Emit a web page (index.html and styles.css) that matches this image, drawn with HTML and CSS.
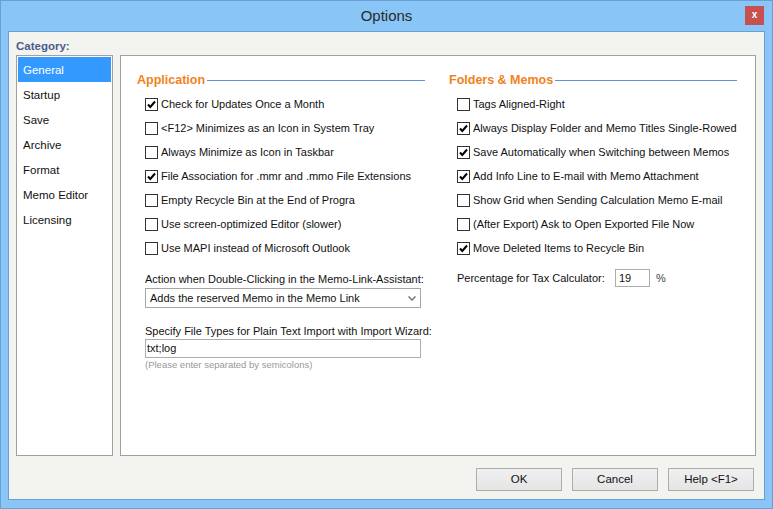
FILE: index.html
```html
<!DOCTYPE html>
<html>
<head>
<meta charset="utf-8">
<title>Options</title>
<link rel="stylesheet" href="styles.css">
</head>
<body>
<div class="window">
  <div class="titlebar">
    <span></span>
    <span class="title">Options</span>
    <div class="close">x</div>
  </div>
  <div class="client">
    <div class="cat-label">Category:</div>
    <div class="main-row">
      <ul class="cat-list">
        <li class="sel">General</li>
        <li>Startup</li>
        <li>Save</li>
        <li>Archive</li>
        <li>Format</li>
        <li>Memo Editor</li>
        <li>Licensing</li>
      </ul>
      <div class="panel">
        <div class="col">
          <div class="heading"><span>Application</span><i class="rule"></i></div>
          <div class="row"><span class="cb on"><svg viewBox="0 0 11 11"><polyline points="2,5.5 4.3,8 9,2.5"/></svg></span>Check for Updates Once a Month</div>
          <div class="row"><span class="cb"></span>&lt;F12&gt; Minimizes as an Icon in System Tray</div>
          <div class="row"><span class="cb"></span>Always Minimize as Icon in Taskbar</div>
          <div class="row"><span class="cb on"><svg viewBox="0 0 11 11"><polyline points="2,5.5 4.3,8 9,2.5"/></svg></span>File Association for .mmr and .mmo File Extensions</div>
          <div class="row"><span class="cb"></span>Empty Recycle Bin at the End of Progra</div>
          <div class="row"><span class="cb"></span>Use screen-optimized Editor (slower)</div>
          <div class="row"><span class="cb"></span>Use MAPI instead of Microsoft Outlook</div>
          <div class="field-label">Action when Double-Clicking in the Memo-Link-Assistant:</div>
          <div class="select"><span>Adds the reserved Memo in the Memo Link</span><svg class="chev" viewBox="0 0 8 5"><polyline points="0.5,0.5 4,4 7.5,0.5"/></svg></div>
          <div class="field-label second">Specify File Types for Plain Text Import with Import Wizard:</div>
          <div class="input">txt;log</div>
          <div class="hint">(Please enter separated by semicolons)</div>
        </div>
        <div class="col">
          <div class="heading"><span>Folders &amp; Memos</span><i class="rule"></i></div>
          <div class="row"><span class="cb"></span>Tags Aligned-Right</div>
          <div class="row"><span class="cb on"><svg viewBox="0 0 11 11"><polyline points="2,5.5 4.3,8 9,2.5"/></svg></span>Always Display Folder and Memo Titles Single-Rowed</div>
          <div class="row"><span class="cb on"><svg viewBox="0 0 11 11"><polyline points="2,5.5 4.3,8 9,2.5"/></svg></span>Save Automatically when Switching between Memos</div>
          <div class="row"><span class="cb on"><svg viewBox="0 0 11 11"><polyline points="2,5.5 4.3,8 9,2.5"/></svg></span>Add Info Line to E-mail with Memo Attachment</div>
          <div class="row"><span class="cb"></span>Show Grid when Sending Calculation Memo E-mail</div>
          <div class="row"><span class="cb"></span>(After Export) Ask to Open Exported File Now</div>
          <div class="row"><span class="cb on"><svg viewBox="0 0 11 11"><polyline points="2,5.5 4.3,8 9,2.5"/></svg></span>Move Deleted Items to Recycle Bin</div>
          <div class="pct-row">
            <span class="pct-label">Percentage for Tax Calculator:</span>
            <span class="pct-input">19</span>
            <span class="pct-sign">%</span>
          </div>
        </div>
      </div>
    </div>
    <div class="buttons">
      <div class="btn">OK</div>
      <div class="btn">Cancel</div>
      <div class="btn">Help &lt;F1&gt;</div>
    </div>
  </div>
</div>
</body>
</html>
```
FILE: styles.css
```css
* { box-sizing: border-box; }
html, body { margin: 0; padding: 0; }
body {
  width: 773px;
  height: 509px;
  overflow: hidden;
  font-family: "Liberation Sans", Arial, sans-serif;
  font-size: 11px;
  color: #111;
}
.window {
  width: 773px;
  height: 509px;
  background: #8ac5f8;
  border: 1px solid #6a9fd2;
  display: flex;
  flex-direction: column;
}
.titlebar {
  height: 30px;
  display: grid;
  grid-template-columns: 1fr auto 1fr;
  align-items: center;
}
.title {
  font-size: 15px;
  color: #2a2a2a;
  margin-top: -1px;
}
.close {
  justify-self: end;
  align-self: start;
  margin-top: 5px;
  margin-right: 8px;
  width: 19px;
  height: 19px;
  background: #c75050;
  color: #fff;
  font-weight: bold;
  font-size: 10px;
  line-height: 18px;
  text-align: center;
}
.client {
  margin: 0 7px 8px 7px;
  height: 469px;
  background: #f3f4ef;
  border: 1px solid #6e9ed0;
  padding: 7px 8px 8px 7px;
  display: flex;
  flex-direction: column;
}
.cat-label {
  height: 16px;
  line-height: 15px;
  font-weight: bold;
  font-size: 11.5px;
  color: #4a5c8c;
}
.main-row {
  display: flex;
  gap: 7px;
  height: 401px;
}
.cat-list {
  list-style: none;
  margin: 0;
  width: 97px;
  height: 401px;
  border: 1px solid #a0a0a0;
  background: #fff;
  padding: 1px;
}
.cat-list li {
  height: 25px;
  line-height: 25px;
  padding-left: 5px;
  padding-top: 1px;
  font-size: 11.5px;
}
.cat-list li.sel {
  background: #3399ff;
  color: #fff;
}
.panel {
  flex: 1;
  border: 1px solid #a0a0a0;
  background: #fff;
  padding: 16px 16px;
  display: flex;
  gap: 24px;
}
.col {
  width: 288px;
  display: flex;
  flex-direction: column;
}
.heading {
  height: 16px;
  display: flex;
  align-items: center;
  margin-bottom: 4px;
}
.heading span {
  font-weight: bold;
  font-size: 12.5px;
  color: #f0821e;
}
.rule {
  flex: 1;
  height: 1px;
  background: #5f95d4;
  margin-left: 2px;
}
.row {
  height: 24px;
  display: flex;
  align-items: center;
  padding-left: 8px;
  white-space: nowrap;
}
.cb {
  width: 13px;
  height: 13px;
  border: 1px solid #333;
  background: #fff;
  margin-right: 3px;
  flex: none;
  display: flex;
}
.cb svg {
  width: 11px;
  height: 11px;
}
.cb polyline {
  fill: none;
  stroke: #000;
  stroke-width: 2;
}
.field-label {
  margin-top: 12px;
  margin-bottom: 1px;
  line-height: 15px;
  padding-left: 8px;
  white-space: nowrap;
}
.field-label.second {
  margin-top: 16px;
  margin-bottom: 0;
}
.select {
  margin-left: 8px;
  width: 276px;
  height: 20px;
  border: 1px solid #a6a6a6;
  background: #fff;
  display: flex;
  align-items: center;
  justify-content: space-between;
  padding: 0 4px 0 4px;
}
.chev {
  width: 8px;
  height: 5px;
}
.chev polyline {
  fill: none;
  stroke: #777;
  stroke-width: 1.5;
}
.input {
  margin-left: 8px;
  width: 276px;
  height: 19px;
  border: 1px solid #abadb3;
  background: #fff;
  line-height: 17px;
  padding-left: 1px;
}
.hint {
  padding-left: 8px;
  font-size: 9.5px;
  line-height: 13px;
  color: #999;
}
.pct-row {
  margin-top: 9px;
  height: 18px;
  display: flex;
  align-items: center;
  padding-left: 8px;
}
.pct-label {
  width: 158px;
}
.pct-input {
  width: 35px;
  height: 18px;
  border: 1px solid #abadb3;
  line-height: 16px;
  padding-left: 3px;
}
.pct-sign {
  margin-left: 6px;
  color: #444;
}
.buttons {
  margin-top: 12px;
  display: flex;
  justify-content: flex-end;
  gap: 10px;
  padding-right: 2px;
}
.btn {
  width: 86px;
  height: 23px;
  border: 1px solid #adadad;
  background: linear-gradient(#f0f0f0, #e5e5e5);
  text-align: center;
  line-height: 21px;
  font-size: 11.5px;
}
```
